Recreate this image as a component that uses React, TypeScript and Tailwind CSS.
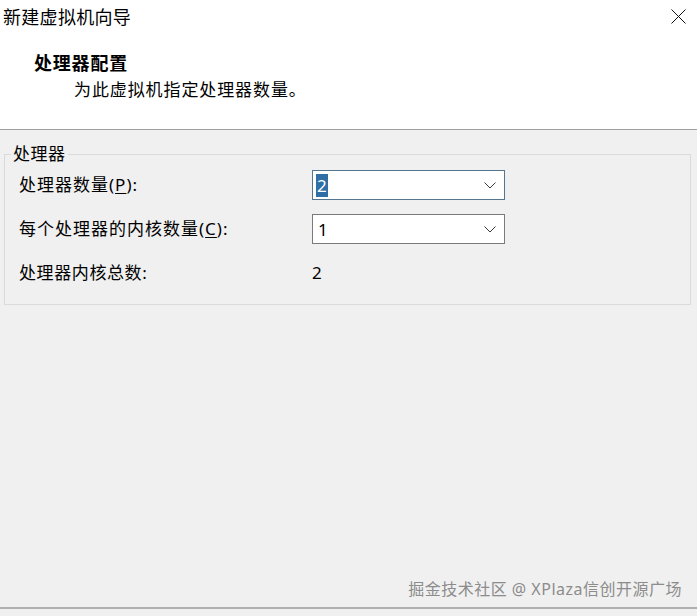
const font = "font-['Noto_Sans','Noto_Sans_CJK_SC',sans-serif]";

function Chevron() {
  return (
    <svg width="12" height="7" viewBox="0 0 12 7" fill="none" className="shrink-0">
      <path d="M0.5 0.5 L6 6 L11.5 0.5" stroke="#3a3a3a" strokeWidth="1" />
    </svg>
  );
}

type ComboProps = {
  value: string;
  focused?: boolean;
};

function Combo({ value, focused }: ComboProps) {
  return (
    <div
      className={
        focused
          ? "w-[193px] h-[30px] bg-white border border-[#56768f] flex items-center justify-between pl-[3px] pr-[8px]"
          : "w-[193px] h-[30px] bg-white border border-[#7a7a7a] flex items-center justify-between pl-[5px] pr-[8px]"
      }
    >
      {focused ? (
        <span className="bg-[#2f6fa6] text-white text-[17px] leading-[23px] px-[1px]">{value}</span>
      ) : (
        <span className="text-[17px] leading-[23px] text-black">{value}</span>
      )}
      <Chevron />
    </div>
  );
}

export default function App() {
  return (
    <div className={`w-[697px] h-[616px] flex flex-col bg-[#f0f0f0] text-black ${font}`}>
      <div className="h-[130px] shrink-0 bg-white border-b border-[#a0a0a0]">
        <div className="flex justify-between items-start pt-[6px] pl-[3px] pr-[11px]">
          <span className="text-[18px] leading-[22px] tracking-[0.3px]">新建虚拟机向导</span>
          <svg width="15" height="15" viewBox="0 0 15 15" className="mt-[3px]">
            <path d="M0.5 0.5 L14.5 14.5 M14.5 0.5 L0.5 14.5" stroke="#111" strokeWidth="1" />
          </svg>
        </div>
        <div className="pl-[34px] mt-[24px] text-[18px] leading-[22px] font-bold tracking-[0.8px]">处理器配置</div>
        <div className="pl-[74px] mt-[5px] text-[17px] leading-[22px] tracking-[0.9px]">为此虚拟机指定处理器数量。</div>
      </div>

      <div className="flex-1 flex flex-col">
        <fieldset className="mt-[15px] ml-[4px] mr-[6px] border border-[#dadada] pb-[16px]">
          <legend className="ml-[6px] px-[2px] text-[17px] leading-[18px] tracking-[0.5px]">处理器</legend>
          <div className="pt-[7px] pl-[14px] grid grid-cols-[293px_193px] gap-y-[14px] items-center text-[17px]">
            <span className="leading-[30px] tracking-[1px]">
              处理器数量(<span className="underline underline-offset-2">P</span>):
            </span>
            <Combo value="2" focused />
            <span className="leading-[30px] tracking-[1px]">
              每个处理器的内核数量(<span className="underline underline-offset-2">C</span>):
            </span>
            <Combo value="1" />
            <span className="leading-[30px] tracking-[0.6px]">处理器内核总数:</span>
            <span className="leading-[30px]">2</span>
          </div>
        </fieldset>

        <div className="mt-auto flex justify-end pr-[15px] pb-[6px]">
          <span className="text-[16px] leading-[24px] tracking-[0.5px] text-[#8c8c8c]">
            掘金技术社区 @ XPlaza信创开源广场
          </span>
        </div>
      </div>

      <div className="h-[9px] shrink-0 border-t-2 border-[#b0b0b0]" />
    </div>
  );
}
